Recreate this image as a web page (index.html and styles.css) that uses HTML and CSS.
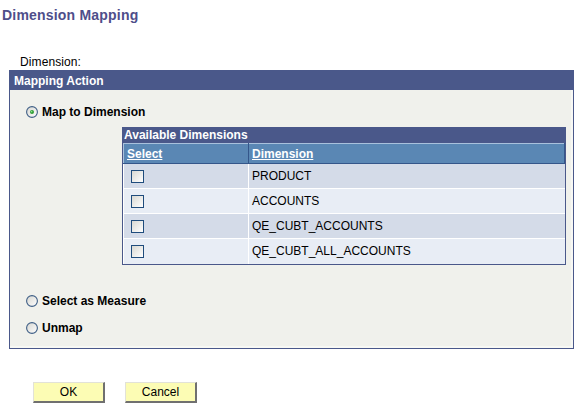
FILE: index.html
```html
<!DOCTYPE html>
<html>
<head>
<meta charset="utf-8">
<title>Dimension Mapping</title>
<link rel="stylesheet" href="styles.css">
</head>
<body>
<h1 class="title">Dimension Mapping</h1>
<div class="field-label">Dimension:</div>
<section class="groupbox">
  <div class="gb-header">Mapping Action</div>
  <div class="gb-body">
    <label class="radio-row first">
      <svg class="radio" width="12" height="12" viewBox="0 0 12 12">
        <defs><linearGradient id="rg1" x1="0" y1="0" x2="1" y2="1"><stop offset="0" stop-color="#d6d6d0"/><stop offset="1" stop-color="#ffffff"/></linearGradient></defs>
        <circle cx="6" cy="6" r="5.4" fill="url(#rg1)" stroke="#3f5f86" stroke-width="1.1"/>
        <circle cx="6" cy="6" r="2" fill="#2f9e36"/>
        <circle cx="5.6" cy="5.6" r="0.8" fill="#8fe08f"/>
      </svg>
      <span>Map to Dimension</span>
    </label>
    <div class="grid">
      <div class="grid-title">Available Dimensions</div>
      <table class="grid-table">
        <thead>
          <tr><th class="c-sel"><a>Select</a></th><th class="c-dim"><a>Dimension</a></th></tr>
        </thead>
        <tbody>
          <tr class="odd"><td class="c-sel"><span class="chk"></span></td><td class="c-dim">PRODUCT</td></tr>
          <tr class="even"><td class="c-sel"><span class="chk"></span></td><td class="c-dim">ACCOUNTS</td></tr>
          <tr class="odd"><td class="c-sel"><span class="chk"></span></td><td class="c-dim">QE_CUBT_ACCOUNTS</td></tr>
          <tr class="even"><td class="c-sel"><span class="chk"></span></td><td class="c-dim">QE_CUBT_ALL_ACCOUNTS</td></tr>
        </tbody>
      </table>
    </div>
    <label class="radio-row second">
      <svg class="radio" width="12" height="12" viewBox="0 0 12 12">
        <defs><linearGradient id="rg2" x1="0" y1="0" x2="1" y2="1"><stop offset="0" stop-color="#d6d6d0"/><stop offset="1" stop-color="#ffffff"/></linearGradient></defs>
        <circle cx="6" cy="6" r="5.4" fill="url(#rg2)" stroke="#3f5f86" stroke-width="1.1"/>
      </svg>
      <span>Select as Measure</span>
    </label>
    <label class="radio-row third">
      <svg class="radio" width="12" height="12" viewBox="0 0 12 12">
        <defs><linearGradient id="rg3" x1="0" y1="0" x2="1" y2="1"><stop offset="0" stop-color="#d6d6d0"/><stop offset="1" stop-color="#ffffff"/></linearGradient></defs>
        <circle cx="6" cy="6" r="5.4" fill="url(#rg3)" stroke="#3f5f86" stroke-width="1.1"/>
      </svg>
      <span>Unmap</span>
    </label>
  </div>
</section>
<div class="buttons">
  <button class="btn">OK</button>
  <button class="btn">Cancel</button>
</div>
</body>
</html>
```
FILE: styles.css
```css
html, body {
  margin: 0;
  padding: 0;
  background: #ffffff;
  font-family: "Liberation Sans", Arial, sans-serif;
  font-size: 12px;
  color: #000;
}
.title {
  margin: 0;
  padding: 7px 0 0 2px;
  font-size: 14px;
  line-height: 16px;
  font-weight: bold;
  letter-spacing: 0.2px;
  color: #4e4e8a;
}
.field-label {
  margin-top: 32px;
  padding-left: 20px;
  line-height: 14px;
  height: 14px;
  letter-spacing: 0.1px;
}
.groupbox {
  margin: 1px 0 0 9px;
  width: 565px;
  box-sizing: border-box;
  border: 1px solid #4a588a;
  border-top: none;
  background: #f0f1ec;
}
.gb-header {
  background: #4a588a;
  color: #fff;
  font-weight: bold;
  height: 20px;
  box-sizing: border-box;
  padding: 2px 0 0 4px;
  line-height: 18px;
}
.gb-body {
  display: flex;
  flex-direction: column;
  align-items: flex-start;
  padding: 15px 0 12px 16px;
  height: 258px;
  box-sizing: border-box;
  border-right: 2px solid #f7f8f4;
  border-bottom: 2px solid #f7f8f4;
}
.radio-row {
  display: flex;
  align-items: center;
  height: 14px;
  line-height: 14px;
  font-weight: bold;
}
.radio-row .radio {
  flex: none;
  margin-right: 4px;
}
.grid {
  margin: 8px 0 0 96px;
  width: 444px;
  box-sizing: border-box;
  border: 1px solid #4a588a;
  background: #fff;
}
.grid-title {
  background: #4a588a;
  color: #fff;
  font-weight: bold;
  height: 15px;
  line-height: 15px;
  padding-left: 1px;
}
.grid-table {
  width: 100%;
  border-collapse: collapse;
  border-spacing: 0;
}
.grid-table th {
  background: #5a87b4;
  color: #fff;
  font-weight: bold;
  text-align: left;
  height: 20px;
  box-sizing: border-box;
  padding: 0 0 0 3px;
  border-top: 1px solid #a9c1dc;
  border-left: 1px solid #a9c1dc;
  border-bottom: 1px solid #34568a;
  border-right: 1px solid #34568a;
  line-height: 14px;
}
.grid-table th a {
  color: #fff;
  text-decoration: underline;
}
.grid-table th.c-sel {
  width: 125px;
}
.grid-table td {
  height: 25px;
  box-sizing: border-box;
  padding: 0 0 0 3px;
  border-top: 1px solid #fff;
  border-left: 1px solid #fff;
  line-height: 14px;
  vertical-align: middle;
}
.grid-table td.c-sel {
  padding-left: 7px;
  border-left: none;
}
.grid-table tr.odd td {
  background: #d4dbe8;
}
.grid-table tr.even td {
  background: #e8edf5;
}
.chk {
  display: block;
  width: 13px;
  height: 13px;
  box-sizing: border-box;
  border: 1px solid #1f4c7c;
  background: linear-gradient(135deg, #d8d8d2 0%, #ffffff 100%);
}
.radio-row.second {
  margin-top: 29px;
}
.radio-row.third {
  margin-top: 13px;
}
.buttons {
  display: flex;
  gap: 20px;
  margin: 33px 0 0 33px;
}
.btn {
  width: 72px;
  height: 21px;
  box-sizing: border-box;
  background: #fcfcb4;
  border-style: solid;
  border-width: 1px 2px 2px 1px;
  border-color: #e2e2d8 #707070 #707070 #e2e2d8;
  font-family: "Liberation Sans", Arial, sans-serif;
  font-size: 12px;
  color: #000;
  padding: 0;
  line-height: 17px;
}
```
